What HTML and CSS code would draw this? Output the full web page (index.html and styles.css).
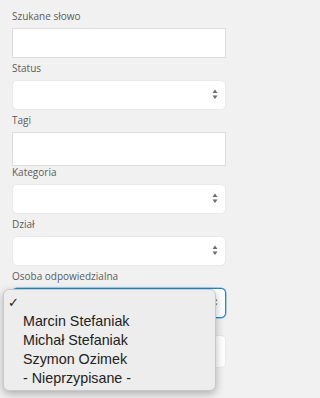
FILE: index.html
```html
<!DOCTYPE html>
<html lang="pl">
<head>
<meta charset="utf-8">
<title>Filtr</title>
<link rel="stylesheet" href="styles.css">
</head>
<body>
<form class="filters">
  <div class="field">
    <label class="label">Szukane słowo</label>
    <div class="box input"></div>
  </div>
  <div class="field">
    <label class="label">Status</label>
    <div class="box select"><svg class="arrows" width="6" height="11" viewBox="0 0 6 11"><path d="M3 0.5 L5.5 4 L0.5 4 Z M0.5 6.5 L5.5 6.5 L3 10 Z" fill="#6b6b6b"/></svg></div>
  </div>
  <div class="field">
    <label class="label">Tagi</label>
    <div class="box input tall"></div>
  </div>
  <div class="field after-tall">
    <label class="label">Kategoria</label>
    <div class="box select"><svg class="arrows" width="6" height="11" viewBox="0 0 6 11"><path d="M3 0.5 L5.5 4 L0.5 4 Z M0.5 6.5 L5.5 6.5 L3 10 Z" fill="#6b6b6b"/></svg></div>
  </div>
  <div class="field">
    <label class="label">Dział</label>
    <div class="box select"><svg class="arrows" width="6" height="11" viewBox="0 0 6 11"><path d="M3 0.5 L5.5 4 L0.5 4 Z M0.5 6.5 L5.5 6.5 L3 10 Z" fill="#6b6b6b"/></svg></div>
  </div>
  <div class="field open">
    <label class="label">Osoba odpowiedzialna</label>
    <div class="box select focus"><svg class="arrows" width="6" height="11" viewBox="0 0 6 11"><path d="M3 0.5 L5.5 4 L0.5 4 Z M0.5 6.5 L5.5 6.5 L3 10 Z" fill="#6b6b6b"/></svg></div>
    <ul class="menu">
      <li class="item checked"><span class="check">✓</span></li>
      <li class="item">Marcin Stefaniak</li>
      <li class="item">Michał Stefaniak</li>
      <li class="item">Szymon Ozimek</li>
      <li class="item">- Nieprzypisane -</li>
    </ul>
  </div>
  <div class="field last">
    <div class="box select short"></div>
  </div>
</form>
</body>
</html>
```

FILE: styles.css
```css
html, body {
  margin: 0;
  padding: 0;
  background: #f1f1f1;
}
body {
  width: 236px;
  height: 398px;
  overflow: hidden;
  font-family: "Open Sans", "Liberation Sans", sans-serif;
}
.filters {
  padding: 8px 10px 0 12px;
}
.field {
  position: relative;
  margin-bottom: 2px;
}
.open {
  z-index: 5;
}
.label {
  display: block;
  font-size: 10px;
  line-height: 16px;
  height: 16px;
  color: #5c5c5c;
  margin-bottom: 4px;
}
.box {
  box-sizing: border-box;
  height: 30px;
  width: 214px;
  background: #fff;
  border: 1px solid #dedede;
  position: relative;
}
.input {
  border-radius: 0;
}
.tall {
  height: 34px;
}
.after-tall {
  margin-top: -4px;
}
.select {
  border: 1px solid #e9e9e9;
  border-radius: 5px;
  display: flex;
  align-items: center;
  justify-content: flex-end;
  padding-right: 7px;
}
.arrows {
  display: block;
  margin-top: -2px;
}
.focus {
  border: 1px solid #1e88d0;
  box-shadow: 0 0 0 0.5px #5aa8de;
}
.last {
  margin-top: 17px;
}
.short {
  height: 33px;
}
.menu {
  position: absolute;
  left: -9px;
  top: 21px;
  width: 213px;
  margin: 0;
  padding: 3px 0;
  list-style: none;
  background: #ededed;
  border: 1px solid #c9c9c9;
  border-radius: 6px;
  box-shadow: 0 3px 8px rgba(0, 0, 0, 0.28);
  font-family: "Liberation Sans", Arial, sans-serif;
  font-size: 14.3px;
  color: #222;
  box-sizing: border-box;
  height: 102px;
}
.item {
  height: 19px;
  line-height: 19px;
  padding-left: 19px;
  position: relative;
  white-space: nowrap;
}
.check {
  position: absolute;
  left: 4px;
  top: 0;
  font-family: "DejaVu Sans", sans-serif;
  font-size: 13px;
  font-weight: bold;
}
```
